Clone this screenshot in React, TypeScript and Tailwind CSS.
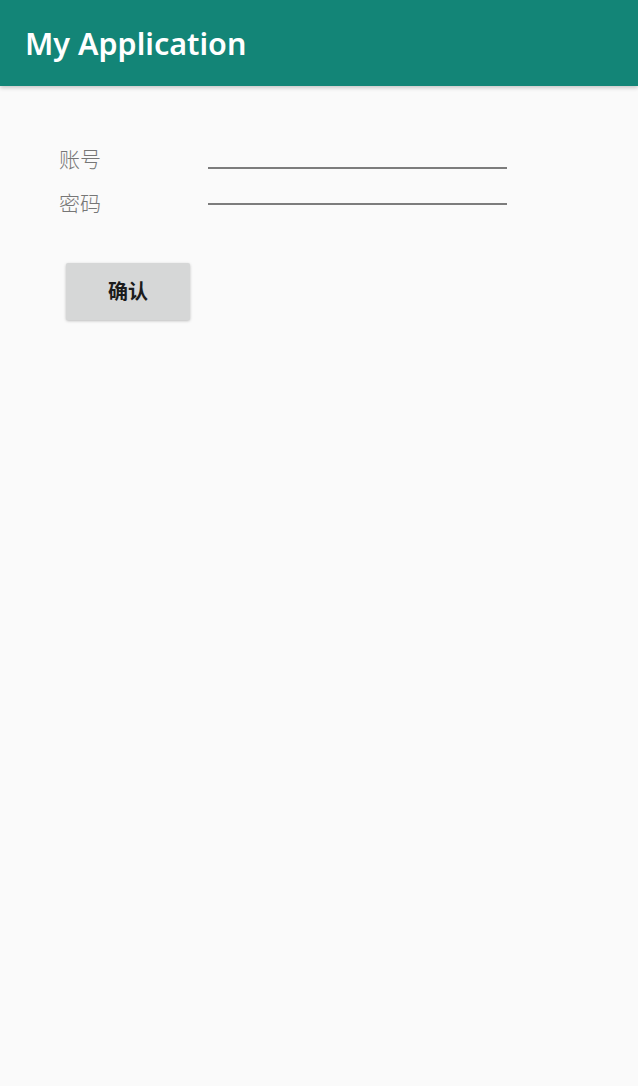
export default function App() {
  return (
    <div className="w-[638px] h-[1086px] bg-[#fafafa] flex flex-col" style={{ fontFamily: '"Noto Sans", "Noto Sans CJK SC", sans-serif' }}>
      <header className="h-[86px] bg-[#138577] flex items-center pl-[25px] shadow-[0_2px_4px_rgba(0,0,0,0.2)] z-10">
        <h1 className="text-white text-[30.5px] font-semibold leading-none">My Application</h1>
      </header>
      <main className="flex flex-col pt-[53px] pl-[59px]">
        <div className="flex items-end h-[36px]">
          <span className="w-[149px] text-[21px] text-[#767676] font-light leading-none pb-[5px]">账号</span>
          <div className="w-[299px] h-[2px] bg-[#7c7c7c] mb-[6px]" />
        </div>
        <div className="flex items-end h-[36px]">
          <span className="w-[149px] text-[21px] text-[#767676] font-light leading-none -mb-[3px]">密码</span>
          <div className="w-[299px] h-[2px] bg-[#7c7c7c] mb-[6px]" />
        </div>
        <button className="mt-[52px] ml-[7px] w-[124px] h-[57px] bg-[#d6d7d7] rounded-[2px] shadow-[0_1px_3px_rgba(0,0,0,0.25)] text-[20px] font-bold text-[#1c1c1c]">
          确认
        </button>
      </main>
    </div>
  );
}
